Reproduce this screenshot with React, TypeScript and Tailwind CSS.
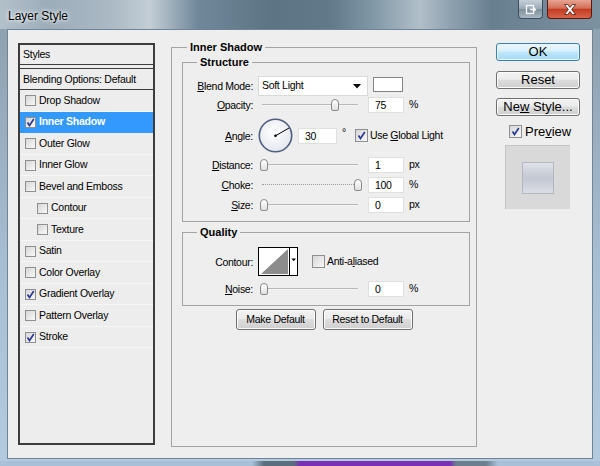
import React from "react";

type Item = { label: string; checked?: boolean; selected?: boolean; sub?: boolean };

const items: Item[] = [
  { label: "Drop Shadow" },
  { label: "Inner Shadow", checked: true, selected: true },
  { label: "Outer Glow" },
  { label: "Inner Glow" },
  { label: "Bevel and Emboss" },
  { label: "Contour", sub: true },
  { label: "Texture", sub: true },
  { label: "Satin" },
  { label: "Color Overlay" },
  { label: "Gradient Overlay", checked: true },
  { label: "Pattern Overlay" },
  { label: "Stroke", checked: true },
];

function CheckBox({ checked, big }: { checked?: boolean; big?: boolean }) {
  return (
    <div
      className={
        big
          ? "flex h-[13px] w-[13px] shrink-0 items-center justify-center border border-[#8e8f8f] bg-[linear-gradient(135deg,#d6d6d6,#f9f9f9)]"
          : "flex h-[11px] w-[11px] shrink-0 items-center justify-center border border-[#8e8f8f] bg-[linear-gradient(135deg,#d6d6d6,#f9f9f9)]"
      }
    >
      {checked && (
        <svg width="9" height="9" viewBox="0 0 9 9">
          <polyline points="1.5,4.5 3.5,7.5 7.8,1" fill="none" stroke="#2b3b8f" strokeWidth="1.7" />
        </svg>
      )}
    </div>
  );
}

function Slider({ pct, dotted }: { pct: number; dotted?: boolean }) {
  return (
    <div className="relative ml-[5px] h-[16px] w-[104px]">
      {dotted ? (
        <div className="absolute left-[4px] right-[4px] top-[7px] border-t border-dotted border-[#9c9c9c]" />
      ) : (
        <div className="absolute left-[4px] right-[4px] top-[7px] h-[2px] border-t border-[#b8b8b8] bg-[#f4f4f4]" />
      )}
      <div
        className="absolute top-[2px] -ml-[4px] h-[12px] w-[8px] rounded-t-[4px] rounded-b-[2px] border border-[#8a8a8a] bg-gradient-to-b from-white to-[#e0e0e0]"
        style={{ left: `${6 + (pct * 94) / 100}px` }}
      />
    </div>
  );
}

function Field({ value, wide }: { value: string; wide?: boolean }) {
  return (
    <div
      className={
        wide
          ? "ml-[5px] h-[16px] w-[39px] border border-[#e0e0e0] bg-white pl-[6px] leading-[14px]"
          : "ml-[6px] h-[16px] w-[36px] border border-[#e0e0e0] bg-white pl-[6px] leading-[14px]"
      }
    >
      {value}
    </div>
  );
}

function Label({ children }: { children: React.ReactNode }) {
  return <div className="w-[70px] shrink-0 text-right leading-[14px]">{children}</div>;
}

function SliderRow({
  label,
  pct,
  value,
  unit,
  dotted,
  mt,
}: {
  label: React.ReactNode;
  pct: number;
  value: string;
  unit: string;
  dotted?: boolean;
  mt: string;
}) {
  return (
    <div className={`flex h-[16px] items-center ${mt}`}>
      <Label>{label}</Label>
      <Slider pct={pct} dotted={dotted} />
      <Field value={value} />
      <span className="ml-[5px]">{unit}</span>
    </div>
  );
}

function WinButton({ children, primary, w }: { children: React.ReactNode; primary?: boolean; w: string }) {
  return (
    <div
      className={
        primary
          ? `flex items-center justify-center rounded-[3px] border border-[#3c7fb1] bg-[linear-gradient(#eaf6fd_0%,#d9f0fc_45%,#bee6fd_50%,#a7d9f5_100%)] shadow-[inset_0_0_0_1px_#e4f6ff] ${w}`
          : `flex items-center justify-center rounded-[3px] border border-[#707070] bg-[linear-gradient(#f2f2f2_0%,#ebebeb_45%,#dddddd_50%,#cfcfcf_100%)] shadow-[inset_0_0_0_1px_#fbfbfb] ${w}`
      }
    >
      <span>{children}</span>
    </div>
  );
}

export default function App() {
  return (
    <div className="flex h-[466px] w-[600px] flex-col overflow-hidden bg-[linear-gradient(#8c9eac,#a9bfd4_60%,#b3cadf)] font-['Liberation_Sans',Arial,sans-serif] text-black">
      {/* TITLE BAR */}
      <div className="flex h-[29px] shrink-0 items-start bg-[linear-gradient(90deg,#b2c0ca_0%,#9cadba_8%,#a9b8c3_18%,#c3ced6_25%,#70889a_33%,#5d7484_45%,#62798a_55%,#8097a6_62%,#b1bfc9_70%,#8fa2b0_75%,#687f90_82%,#7d92a1_100%)]">
        <div className="pl-[8px] pt-[8px] text-[12px] leading-[16px] [text-shadow:0_0_6px_#ffffff,0_0_3px_#ffffff]">
          Layer Style
        </div>
        <div className="ml-auto mr-[8px] flex gap-[4px]">
          <div className="flex h-[19px] w-[25px] items-center justify-center rounded-b-[4px] border border-t-0 border-[#3f4f5c] bg-[linear-gradient(#c5d0d8,#9aaab6_50%,#7d8f9c_51%,#a9b7c1)]">
            <svg width="12" height="11" viewBox="0 0 12 11">
              <rect x="1.5" y="1.5" width="7" height="8" fill="none" stroke="#f4f6f8" strokeWidth="1.3" />
              <path d="M5 5.5h5.5M8.5 3.5l2 2-2 2" fill="none" stroke="#f4f6f8" strokeWidth="1.3" />
            </svg>
          </div>
          <div className="flex h-[19px] w-[45px] items-center justify-center rounded-b-[4px] border border-t-0 border-[#5b1a10] bg-[linear-gradient(#e8a493,#d4705a_45%,#c23b22_52%,#d9654a)]">
            <svg width="14" height="11" viewBox="0 0 14 11">
              <path
                d="M1.5 0.5h3.2L7 3.4 9.3 0.5h3.2L8.7 5.5l3.8 5h-3.2L7 7.6 4.7 10.5H1.5l3.8-5z"
                fill="#ffffff"
                stroke="#4a1a12"
                strokeWidth="0.8"
              />
            </svg>
          </div>
        </div>
      </div>

      {/* CLIENT AREA */}
      <div className="mx-[7px] flex h-[430px] shrink-0 items-start border border-[#6f8496] bg-[#eeeeee] pl-[10px] pt-[13px]">
        {/* STYLES LIST */}
        <div className="h-[402px] w-[137px] shrink-0 border-2 border-[#3d3d3d] bg-[#ededed] text-[10.5px] tracking-[-0.25px]">
          <div className="h-[20px] border-b border-[#3d3d3d] pl-[3px] leading-[19px]">Styles</div>
          <div className="h-[3px]" />
          <div className="h-[22px] border-y border-[#3d3d3d] pl-[3px] leading-[20px]">Blending Options: Default</div>
          {items.map((it, i) => (
            <div
              key={it.label}
              className={`flex items-center border-b border-dotted ${i % 2 ? "h-[21px]" : "h-[22px]"} ${
                it.selected ? "border-[#3399ff] bg-[#3399ff] font-bold text-white" : "border-white"
              } ${it.sub ? "pl-[17px]" : "pl-[5px]"}`}
            >
              <CheckBox checked={it.checked} />
              <span className="ml-[3px]">{it.label}</span>
            </div>
          ))}
        </div>

        {/* SETTINGS */}
        <div className="-mt-[3px] ml-[16px] w-[306px] shrink-0 text-[10.5px] tracking-[-0.3px]">
          <fieldset className="h-[407px] border border-[#a3a3a3]">
            <legend className="ml-[15px] px-[3px] text-[11px] font-bold leading-[14px] tracking-normal">Inner Shadow</legend>

            {/* STRUCTURE */}
            <fieldset className="ml-[10px] mt-[1px] w-[288px] border border-[#a3a3a3] pb-[8px]">
              <legend className="ml-[14px] px-[3px] text-[11px] font-bold leading-[14px] tracking-normal">Structure</legend>
              <div className="pt-[7px]">
                <div className="flex h-[20px] items-start">
                  <div className="self-center">
                    <Label>
                      <span className="underline">B</span>lend Mode:
                    </Label>
                  </div>
                  <div className="ml-[5px] flex h-[20px] w-[110px] items-center justify-between border border-[#dadada] bg-white pl-[3px] pr-[6px]">
                    <span>Soft Light</span>
                    <svg width="8" height="5" viewBox="0 0 8 5">
                      <path d="M0 0h8L4 4.5z" fill="#000" />
                    </svg>
                  </div>
                  <div className="ml-[5px] mt-[1px] h-[15px] w-[30px] border border-[#858585] bg-white" />
                </div>

                <SliderRow
                  mt="mt-[1px]"
                  label={
                    <>
                      <span className="underline">O</span>pacity:
                    </>
                  }
                  pct={76}
                  value="75"
                  unit="%"
                />

                <div className="mt-[5px] flex h-[35px] items-center">
                  <Label>
                    <span className="underline">A</span>ngle:
                  </Label>
                  <svg className="ml-[5px]" width="35" height="35" viewBox="0 0 35 35">
                    <defs>
                      <radialGradient id="dial" cx="0.45" cy="0.4" r="0.6">
                        <stop offset="0" stopColor="#ffffff" />
                        <stop offset="1" stopColor="#e4e8ef" />
                      </radialGradient>
                    </defs>
                    <circle cx="17.5" cy="17.5" r="16.2" fill="url(#dial)" stroke="#4f5d7e" strokeWidth="1.6" />
                    <line x1="17.5" y1="17.8" x2="31" y2="10" stroke="#000" strokeWidth="1" />
                    <circle cx="17.5" cy="17.8" r="1.3" fill="#000" />
                  </svg>
                  <Field value="30" wide />
                  <span className="ml-[5px] -mt-[6px]">°</span>
                  <div className="ml-[9px]">
                    <CheckBox checked big />
                  </div>
                  <span className="ml-[2px]">
                    Use <span className="underline">G</span>lobal Light
                  </span>
                </div>

                <SliderRow
                  mt="mt-[4px]"
                  label={
                    <>
                      <span className="underline">D</span>istance:
                    </>
                  }
                  pct={0}
                  value="1"
                  unit="px"
                />
                <SliderRow
                  mt="mt-[4px]"
                  label={
                    <>
                      <span className="underline">C</span>hoke:
                    </>
                  }
                  pct={100}
                  value="100"
                  unit="%"
                  dotted
                />
                <SliderRow
                  mt="mt-[4px]"
                  label={
                    <>
                      <span className="underline">S</span>ize:
                    </>
                  }
                  pct={0}
                  value="0"
                  unit="px"
                />
              </div>
            </fieldset>

            {/* QUALITY */}
            <fieldset className="ml-[10px] mt-[3px] w-[288px] border border-[#a3a3a3] pb-[8px]">
              <legend className="ml-[14px] px-[3px] text-[11px] font-bold leading-[14px] tracking-normal">Quality</legend>
              <div className="pt-[8px]">
                <div className="flex h-[29px] items-center">
                  <Label>Contour:</Label>
                  <svg className="ml-[5px]" width="40" height="29" viewBox="0 0 40 29">
                    <rect x="0.5" y="0.5" width="39" height="28" fill="#fff" stroke="#000" />
                    <polygon points="3,27 30,2 30,27" fill="#8c8c8c" />
                    <line x1="31.5" y1="0.5" x2="31.5" y2="28.5" stroke="#000" />
                    <path d="M33.5 11.5h4.5l-2.25 2.8z" fill="#000" />
                  </svg>
                  <div className="ml-[14px]">
                    <CheckBox big />
                  </div>
                  <span className="ml-[2px]">
                    Anti-a<span className="underline">l</span>iased
                  </span>
                </div>
                <SliderRow
                  mt="mt-[5px]"
                  label={
                    <>
                      <span className="underline">N</span>oise:
                    </>
                  }
                  pct={0}
                  value="0"
                  unit="%"
                />
              </div>
            </fieldset>

            <div className="mt-[3px] flex justify-center gap-[7px]">
              <WinButton w="h-[21px] w-[80px]">Make Default</WinButton>
              <WinButton w="h-[21px] w-[90px]">Reset to Default</WinButton>
            </div>
          </fieldset>
        </div>

        {/* ACTIONS */}
        <div className="ml-[19px] flex w-[84px] shrink-0 flex-col text-[13px]">
          <WinButton primary w="h-[18px] w-[84px]">
            OK
          </WinButton>
          <div className="mt-[10px]">
            <WinButton w="h-[18px] w-[84px]">Reset</WinButton>
          </div>
          <div className="mt-[9px]">
            <WinButton w="h-[18px] w-[84px]">
              Ne<span className="underline">w</span> Style...
            </WinButton>
          </div>
          <div className="ml-[13px] mt-[9px] flex h-[13px] items-center">
            <CheckBox checked big />
            <span className="ml-[3px]">
              Pre<span className="underline">v</span>iew
            </span>
          </div>
          <div className="ml-[9px] mt-[7px] flex h-[64px] w-[65px] items-center justify-center border-l border-t border-[#c4c4c4] bg-[#d9d9d9]">
            <div className="h-[32px] w-[32px] border border-[#b3b7c2] bg-[linear-gradient(#dfe2e8,#c3c7d2_50%,#dadde4)]" />
          </div>
        </div>
      </div>

      {/* BOTTOM FRAME */}
      <div className="mt-[2px] h-[5px] bg-[linear-gradient(90deg,#a9c1d8_0%,#a9c1d8_42%,#5b6e7d_44%,#5b6e7d_49%,#7a2fb5_50%,#7a2fb5_75%,#6b7f8e_76%,#6b7f8e_81%,#a9c1d8_83%,#a9c1d8_100%)]" />
    </div>
  );
}
